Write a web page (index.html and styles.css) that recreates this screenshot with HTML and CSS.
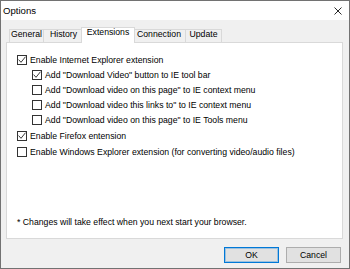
FILE: index.html
```html
<!DOCTYPE html>
<html>
<head>
<meta charset="utf-8">
<title>Options</title>
<link rel="stylesheet" href="styles.css">
</head>
<body>
<div class="window">
  <div class="titlebar">
    <span class="title">Options</span>
    <svg class="close" viewBox="0 0 8 8"><path d="M0.5 0.5 L7.5 7.5 M7.5 0.5 L0.5 7.5" stroke="#111" stroke-width="0.9" fill="none"/></svg>
  </div>
  <div class="content">
    <div class="tabs">
      <div class="tab tab-general">General</div>
      <div class="tab tab-history">History</div>
      <div class="tab tab-extensions active">Extensions</div>
      <div class="tab tab-connection">Connection</div>
      <div class="tab tab-update">Update</div>
    </div>
    <div class="panel">
      <div class="options">
        <div class="row"><span class="cb"><svg viewBox="0 0 8 8"><path d="M0.6 3.6 L3 6.3 L7.5 0.7" stroke="#222" stroke-width="0.9" fill="none"/></svg></span><span>Enable Internet Explorer extension</span></div>
        <div class="sub">
          <div class="row"><span class="cb"><svg viewBox="0 0 8 8"><path d="M0.6 3.6 L3 6.3 L7.5 0.7" stroke="#222" stroke-width="0.9" fill="none"/></svg></span><span>Add "Download Video" button to IE tool bar</span></div>
          <div class="row"><span class="cb"></span><span>Add "Download video on this page" to IE context menu</span></div>
          <div class="row"><span class="cb"></span><span>Add "Download video this links to" to IE context menu</span></div>
          <div class="row"><span class="cb"></span><span>Add "Download video on this page" to IE Tools menu</span></div>
        </div>
        <div class="row spaced"><span class="cb"><svg viewBox="0 0 8 8"><path d="M0.6 3.6 L3 6.3 L7.5 0.7" stroke="#222" stroke-width="0.9" fill="none"/></svg></span><span>Enable Firefox entension</span></div>
        <div class="row spaced"><span class="cb"></span><span>Enable Windows Explorer extension (for converting video/audio files)</span></div>
      </div>
      <div class="note">* Changes will take effect when you next start your browser.</div>
    </div>
    <div class="buttons">
      <button class="btn default">OK</button>
      <button class="btn">Cancel</button>
    </div>
  </div>
</div>
</body>
</html>
```
FILE: styles.css
```css
* { box-sizing: border-box; }
html, body { margin: 0; padding: 0; }
body {
  width: 350px;
  height: 269px;
  overflow: hidden;
  font-family: "Liberation Sans", Arial, sans-serif;
  font-size: 8.7px;
  color: #000;
  background: #fff;
}
.window {
  width: 350px;
  height: 269px;
  border: 1px solid #727272;
  background: #f0f0f0;
  display: flex;
  flex-direction: column;
}
.titlebar {
  height: 19px;
  flex: none;
  background: #fff;
  display: flex;
  align-items: center;
  justify-content: space-between;
  padding: 0 7px 0 2px;
}
.title { font-size: 9.6px; line-height: 19px; }
.close { width: 8px; height: 8px; display: block; }
.content {
  flex: 1;
  display: flex;
  flex-direction: column;
  padding: 7px 6px 5px 5px;
}
.tabs {
  flex: none;
  height: 15px;
  display: flex;
  align-items: flex-end;
  padding-left: 3px;
  position: relative;
  z-index: 1;
}
.tab {
  height: 13px;
  border: 1px solid #d9d9d9;
  border-bottom: none;
  background: #f0f0f0;
  line-height: 9px;
  padding-bottom: 3px;
  text-align: center;
  white-space: nowrap;
  margin-right: -1px;
}
.tab.active {
  height: 16px;
  margin: 0 -3px -1px -2px;
  padding-bottom: 6px;
  background: #fff;
  position: relative;
  z-index: 2;
}
.tab-general { width: 35px; }
.tab-history { width: 41px; }
.tab-extensions { width: 54px; }
.tab-connection { width: 54px; }
.tab-update { width: 37px; }
.panel {
  flex: none;
  height: 197px;
  background: #fff;
  border: 1px solid #d9d9d9;
  display: flex;
  flex-direction: column;
  padding: 10px 0 8px 10px;
}
.row {
  display: flex;
  align-items: flex-start;
  height: 15px;
  line-height: 15px;
  white-space: nowrap;
}
.row.spaced { margin-top: 1px; }
.sub { padding-left: 15px; }
.cb {
  flex: none;
  width: 10px;
  height: 10px;
  margin-top: 2px;
  margin-right: 3px;
  border: 1px solid #333;
  background: #fff;
}
.cb svg { display: block; width: 8px; height: 8px; }
.note { margin-top: auto; line-height: 15px; }
.buttons {
  flex: none;
  display: flex;
  justify-content: flex-end;
  gap: 7px;
  margin-top: 8px;
  padding-right: 2px;
}
.btn {
  width: 55px;
  height: 16px;
  padding: 0;
  border: 1px solid #adadad;
  background: #e1e1e1;
  font: inherit;
  color: #000;
  line-height: 14px;
}
.btn.default {
  border-color: #0078d7;
  box-shadow: inset 0 0 0 1px rgba(0, 120, 215, 0.3);
}
```
